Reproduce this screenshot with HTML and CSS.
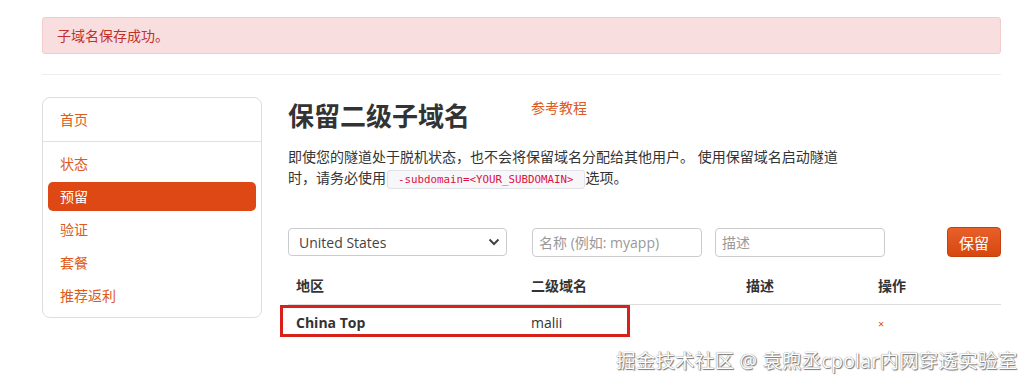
FILE: index.html
```html
<!DOCTYPE html>
<html lang="zh-CN">
<head>
    <meta charset="UTF-8">
    <title>保留二级子域名</title>
    <link rel="stylesheet" href="styles.css">
</head>
<body>
    <div class="page">
        <div class="alert">子域名保存成功。</div>
        <hr class="divider">

        <div class="layout">
            <ul class="side-nav">
                <li class="nav-item"><a href="#">首页</a></li>
                <li class="nav-sep"></li>
                <li class="nav-item"><a href="#">状态</a></li>
                <li class="nav-item active"><a href="#">预留</a></li>
                <li class="nav-item"><a href="#">验证</a></li>
                <li class="nav-item"><a href="#">套餐</a></li>
                <li class="nav-item"><a href="#">推荐返利</a></li>
            </ul>

            <div class="main">
                <div class="title-row">
                    <h1 class="title">保留二级子域名</h1>
                    <a class="help-link" href="#">参考教程</a>
                </div>
                <p class="intro">即使您的隧道处于脱机状态，也不会将保留域名分配给其他用户。 使用保留域名启动隧道时，请务必使用<code>-subdomain=&lt;YOUR_SUBDOMAIN&gt;</code>选项。</p>

                <form class="reserve-form">
                    <div class="select">
                        <span>United States</span>
                        <svg width="12" height="8" viewBox="0 0 12 8"><path d="M1.5 1.5 L6 6 L10.5 1.5" fill="none" stroke="#444" stroke-width="2"/></svg>
                    </div>
                    <input class="field field-name" type="text" placeholder="名称 (例如: myapp)">
                    <input class="field field-desc" type="text" placeholder="描述">
                    <button class="btn-save" type="button">保留</button>
                </form>

                <table class="domains">
                    <thead>
                        <tr>
                            <th class="col-region">地区</th>
                            <th class="col-name">二级域名</th>
                            <th class="col-desc">描述</th>
                            <th>操作</th>
                        </tr>
                    </thead>
                    <tbody>
                        <tr class="marked">
                            <td class="region">China Top</td>
                            <td>malii</td>
                            <td></td>
                            <td><span class="remove">×</span></td>
                        </tr>
                    </tbody>
                </table>
            </div>
        </div>
    </div>

    <div class="watermark">掘金技术社区 @ 袁煦丞cpolar内网穿透实验室</div>
</body>
</html>
```

FILE: styles.css
```css
body {
    margin: 0;
    background: #fff;
    font-family: "Open Sans", "Noto Sans CJK SC", sans-serif;
    font-size: 14px;
    color: #333;
}

.page {
    width: 959px;
    margin: 0 0 0 42px;
    padding-top: 17px;
}

.alert {
    height: 35px;
    line-height: 35px;
    padding: 0 14px;
    background: #f9dedf;
    border: 1px solid #f2cbcd;
    border-radius: 3px;
    color: #c2302c;
    font-size: 14px;
}

.divider {
    border: 0;
    border-top: 1px solid #eeeeee;
    margin: 20px 0 22px;
}

.layout {
    display: flex;
    gap: 26px;
}

/* sidebar */
.side-nav {
    list-style: none;
    margin: 0;
    padding: 5px 5px;
    width: 208px;
    height: 209px;
    border: 1px solid #dddddd;
    border-radius: 8px;
    flex-shrink: 0;
}

.nav-item a {
    display: block;
    height: 33px;
    line-height: 33px;
    padding: 0 12px;
    color: #dd5a20;
    text-decoration: none;
    border-radius: 5px;
}

.nav-item:first-child a {
    height: 34px;
    line-height: 34px;
}

.nav-sep {
    height: 1px;
    background: #e0e0e0;
    margin: 4px -5px 5px;
}

.nav-item.active a {
    height: 29px;
    line-height: 29px;
    margin: 2px 0 2px;
    background: #dd4814;
    color: #fff;
}

/* main column */
.main {
    width: 713px;
    position: relative;
}

.title-row {
    display: flex;
    align-items: flex-start;
    height: 45px;
}

.title {
    margin: 1px 0 0;
    font-size: 26px;
    font-weight: bold;
    color: #333;
    line-height: 36px;
}

.help-link {
    margin: 0 0 0 61px;
    color: #dd5a20;
    text-decoration: none;
    font-size: 14px;
}

.intro {
    width: 560px;
    margin: 4px 0 0;
    line-height: 21px;
}

code {
    font-family: "DejaVu Sans Mono", monospace;
    font-size: 10.8px;
    color: #dd1144;
    background: #f7f7f9;
    border: 1px solid #e1e1e8;
    border-radius: 3px;
    padding: 2px 10px;
    margin: 0 1px;
}

/* form */
.reserve-form {
    display: flex;
    align-items: center;
    margin-top: 37px;
    height: 30px;
}

.select {
    box-sizing: border-box;
    width: 219px;
    height: 28px;
    border: 1px solid #cccccc;
    border-radius: 4px;
    display: flex;
    align-items: center;
    justify-content: space-between;
    padding: 0 6px 0 10px;
    color: #444;
    font-size: 14px;
}

.field {
    box-sizing: border-box;
    height: 29px;
    border: 1px solid #cccccc;
    border-radius: 4px;
    padding: 0 6px;
    font-family: inherit;
    font-size: 14px;
    color: #555;
}

.field::placeholder {
    color: #999;
}

.field-name {
    width: 170px;
    margin-left: 25px;
}

.field-desc {
    width: 170px;
    margin-left: 13px;
}

.btn-save {
    margin-left: auto;
    width: 54px;
    height: 30px;
    border: 1px solid #c5410f;
    border-radius: 4px;
    background: linear-gradient(#e8602a, #d6470f);
    color: #fff;
    font-family: inherit;
    font-size: 15px;
}

/* table */
.domains {
    width: 713px;
    margin-top: 11px;
    border-collapse: collapse;
}

.domains th {
    text-align: left;
    font-weight: bold;
    padding: 7px 8px 9px;
    border-bottom: 1px solid #dddddd;
    height: 17px;
}

.domains td {
    padding: 8px 8px 6px;
    height: 18px;
}

.col-region { width: 219px; }
.col-name { width: 199px; }
.col-desc { width: 116px; }

.region {
    font-weight: bold;
}

.remove {
    color: #dd4814;
    font-size: 11px;
}

/* annotation box around the saved row */
.marked td:first-child {
    position: relative;
}

.marked td:first-child::after {
    content: "";
    position: absolute;
    left: -8px;
    top: 0;
    width: 344px;
    height: 26px;
    border: 3px solid #d9211c;
}

.watermark {
    position: absolute;
    left: 616px;
    top: 345px;
    font-size: 19.5px;
    color: #fff;
    text-shadow: 0 0 1px #666, 1px 1px 1px #777;
    letter-spacing: 0.2px;
}
```
